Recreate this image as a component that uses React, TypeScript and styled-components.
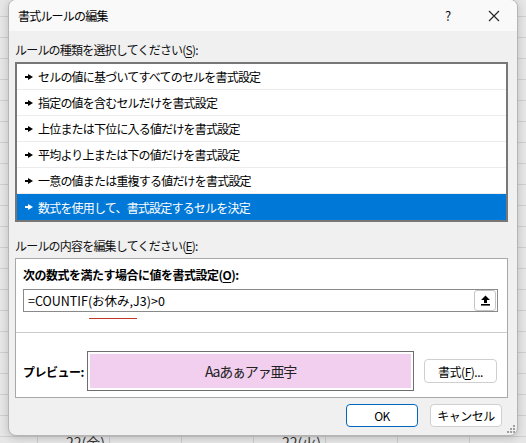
import styled, { createGlobalStyle } from "styled-components";

const GlobalStyle = createGlobalStyle`
  html, body {
    margin: 0;
    padding: 0;
    overflow: hidden;
  }
  body {
    font-family: "Noto Sans CJK JP", "Noto Sans", sans-serif;
    color: #000000;
  }
`

const RULES = [
  "セルの値に基づいてすべてのセルを書式設定",
  "指定の値を含むセルだけを書式設定",
  "上位または下位に入る値だけを書式設定",
  "平均より上または下の値だけを書式設定",
  "一意の値または重複する値だけを書式設定",
  "数式を使用して、書式設定するセルを決定",
]

// spreadsheet behind the dialog
const Sheet = styled.div`
  position: relative;
  width: 526px;
  height: 443px;
  overflow: hidden;
  background-color: #e6e6e6;
  background-image:
    repeating-linear-gradient(to right, transparent 0 36px, #cccccc 36px 37px, transparent 37px 72px),
    repeating-linear-gradient(to bottom, transparent 0 20px, #cfcfcf 20px 21px);
  background-position: 1px 0, 0 -4px;
`

const SheetRow = styled.div`
  position: absolute;
  left: 37px;
  top: 432px;
  display: grid;
  grid-template-columns: repeat(7, 72px);
  font-size: 14px;
  color: #333333;
`

const SheetCell = styled.div`
  text-align: right;
  padding-right: 4px;
  height: 20px;
  line-height: 20px;
`

const Dialog = styled.div`
  position: absolute;
  left: 8px;
  top: -1px;
  width: 508px;
  height: 435px;
  display: flex;
  flex-direction: column;
  background: #f0f0f0;
  border: 1px solid #b5b5b5;
  border-radius: 8px;
  box-shadow: 0 2px 8px rgba(0, 0, 0, 0.18);
  overflow: hidden;
  font-size: 12px;
  letter-spacing: -0.8px;
`

const TitleBar = styled.div`
  height: 31px;
  display: flex;
  align-items: center;
  background: #f9f9f9;
  padding-left: 9px;
  flex-shrink: 0;
`

const Title = styled.div`
  flex: 1;
  font-size: 12px;
`

const TitleButton = styled.div<{ $w: number }>`
  width: ${(p) => p.$w}px;
  height: 31px;
  display: flex;
  align-items: center;
  justify-content: center;
  font-size: 13px;
  letter-spacing: 0;
  color: #111111;
`

const Body = styled.div`
  flex: 1;
  display: flex;
  flex-direction: column;
  padding: 9px 9px 0 6px;
`

const Label = styled.div<{ $top: number }>`
  height: 20px;
  line-height: 20px;
  margin-top: ${(p) => p.$top}px;
  margin-bottom: 2px;
  color: #111111;
  u { text-decoration: underline; text-underline-offset: 2px; }
`

const RuleList = styled.div`
  border: 2px solid #777777;
  background: #ffffff;
  display: flex;
  flex-direction: column;
`

const RuleRow = styled.div<{ $selected?: boolean }>`
  height: 26px;
  display: flex;
  align-items: center;
  gap: 5px;
  padding-left: 8px;
  box-sizing: border-box;
  border-bottom: 1px solid ${(p) => (p.$selected ? "transparent" : "#ececec")};
  background: ${(p) => (p.$selected ? "#0078d7" : "#ffffff")};
  color: ${(p) => (p.$selected ? "#ffffff" : "#000000")};
  &:last-child { border-bottom: none; }
`

const EditBox = styled.div`
  margin-top: 0;
  height: 140px;
  box-sizing: border-box;
  border: 1px solid #a8a8a8;
  background: #ffffff;
  display: flex;
  flex-direction: column;
`

const FormulaSection = styled.div`
  padding: 7px 9px 0 7px;
  height: 74px;
  box-sizing: border-box;
  border-bottom: 1px solid #cccccc;
`

const BoldLabel = styled.div`
  font-weight: 700;
  height: 18px;
  line-height: 18px;
  letter-spacing: -0.5px;
  margin-bottom: 5px;
  u { text-decoration: underline; text-underline-offset: 2px; }
`

const FormulaInput = styled.div`
  position: relative;
  height: 23px;
  box-sizing: border-box;
  border: 1px solid #8a8a8a;
  display: flex;
  align-items: center;
  padding-left: 4px;
  font-size: 12.5px;
  letter-spacing: 0;
`

const FormulaText = styled.div`
  flex: 1;
`

const Squiggle = styled.span`
  position: relative;
  &::after {
    content: "";
    position: absolute;
    left: 1px;
    right: -4px;
    bottom: -9px;
    height: 1px;
    background: #c0392b;
  }
`

const CollapseButton = styled.div`
  width: 20px;
  height: 19px;
  margin-right: 1px;
  border: 1px solid #c4c4c4;
  border-radius: 3px;
  background: #ffffff;
  display: flex;
  align-items: center;
  justify-content: center;
`

const PreviewRow = styled.div`
  display: flex;
  align-items: center;
  padding: 18px 10px 0 7px;
`

const PreviewLabel = styled.div`
  width: 64px;
  font-weight: 700;
  letter-spacing: -0.5px;
`

const PreviewFrame = styled.div`
  width: 327px;
  height: 40px;
  box-sizing: border-box;
  border: 1px solid #6e6e6e;
  padding: 2px;
  background: #ffffff;
  display: flex;
`

const PreviewFill = styled.div`
  flex: 1;
  background: #f2cfee;
  display: flex;
  align-items: center;
  justify-content: center;
  font-size: 14px;
  letter-spacing: -1.2px;
  color: #222222;
`

const Button = styled.div<{ $primary?: boolean }>`
  width: 72px;
  height: 23px;
  box-sizing: border-box;
  border: 1px solid ${(p) => (p.$primary ? "#0067c0" : "#cfcfcf")};
  border-radius: 4px;
  background: #ffffff;
  display: flex;
  align-items: center;
  justify-content: center;
  font-size: 12px;
  letter-spacing: -0.5px;
  u { text-decoration: underline; text-underline-offset: 2px; }
`

const FormatButton = styled(Button)`
  margin-left: auto;
  width: 73px;
  height: 24px;
`

const Footer = styled.div`
  display: flex;
  justify-content: flex-end;
  gap: 12px;
  padding: 6px 6px 0 0;
`

const Grip = styled.svg`
  position: absolute;
  right: 2px;
  bottom: 2px;
`

const RuleArrow = ({ color }: { color: string }) => (
  <svg width="8" height="6" viewBox="0 0 8 6">
    <rect x="0" y="2" width="4" height="2" fill={color} />
    <polygon points="3,0 8,3 3,6" fill={color} />
  </svg>
)

const UpArrow = () => (
  <svg width="11" height="11" viewBox="0 0 11 11">
    <polygon points="5.5,0.5 10,5 7,5 7,8 4,8 4,5 1,5" fill="#000" />
    <rect x="1" y="9" width="9" height="1.6" fill="#000" />
  </svg>
)

const CloseIcon = () => (
  <svg width="12" height="12" viewBox="0 0 12 12">
    <path d="M1 1 L11 11 M11 1 L1 11" stroke="#222" strokeWidth="1.1" />
  </svg>
)

export default function App() {
  return (
    <>
      <GlobalStyle />
      <Sheet>
        <SheetRow>
          <SheetCell>22(金)</SheetCell>
          <SheetCell />
          <SheetCell />
          <SheetCell>22(火)</SheetCell>
        </SheetRow>
        <Dialog>
          <TitleBar>
            <Title>書式ルールの編集</Title>
            <TitleButton $w={46}>?</TitleButton>
            <TitleButton $w={46}>
              <CloseIcon />
            </TitleButton>
          </TitleBar>
          <Body>
            <Label $top={0}>
              ルールの種類を選択してください(<u>S</u>):
            </Label>
            <RuleList>
              {RULES.map((rule, i) => {
                const selected = i === RULES.length - 1
                return (
                  <RuleRow key={rule} $selected={selected}>
                    <RuleArrow color={selected ? "#ffffff" : "#000000"} />
                    <span>{rule}</span>
                  </RuleRow>
                )
              })}
            </RuleList>
            <Label $top={14}>
              ルールの内容を編集してください(<u>E</u>):
            </Label>
            <EditBox>
              <FormulaSection>
                <BoldLabel>
                  次の数式を満たす場合に値を書式設定(<u>O</u>):
                </BoldLabel>
                <FormulaInput>
                  <FormulaText>
                    =COUNTIF<Squiggle>(お休み,</Squiggle>J3)&gt;0
                  </FormulaText>
                  <CollapseButton>
                    <UpArrow />
                  </CollapseButton>
                </FormulaInput>
              </FormulaSection>
              <PreviewRow>
                <PreviewLabel>プレビュー:</PreviewLabel>
                <PreviewFrame>
                  <PreviewFill>Aaあぁアァ亜宇</PreviewFill>
                </PreviewFrame>
                <FormatButton>
                  書式(<u>F</u>)...
                </FormatButton>
              </PreviewRow>
            </EditBox>
            <Footer>
              <Button $primary>OK</Button>
              <Button>キャンセル</Button>
            </Footer>
          </Body>
          <Grip width="8" height="8" viewBox="0 0 8 8">
            <rect x="6" y="0" width="2" height="2" fill="#a0a0a0" />
            <rect x="3" y="3" width="2" height="2" fill="#a0a0a0" />
            <rect x="6" y="3" width="2" height="2" fill="#a0a0a0" />
            <rect x="0" y="6" width="2" height="2" fill="#a0a0a0" />
            <rect x="3" y="6" width="2" height="2" fill="#a0a0a0" />
            <rect x="6" y="6" width="2" height="2" fill="#a0a0a0" />
          </Grip>
        </Dialog>
      </Sheet>
    </>
  )
}
